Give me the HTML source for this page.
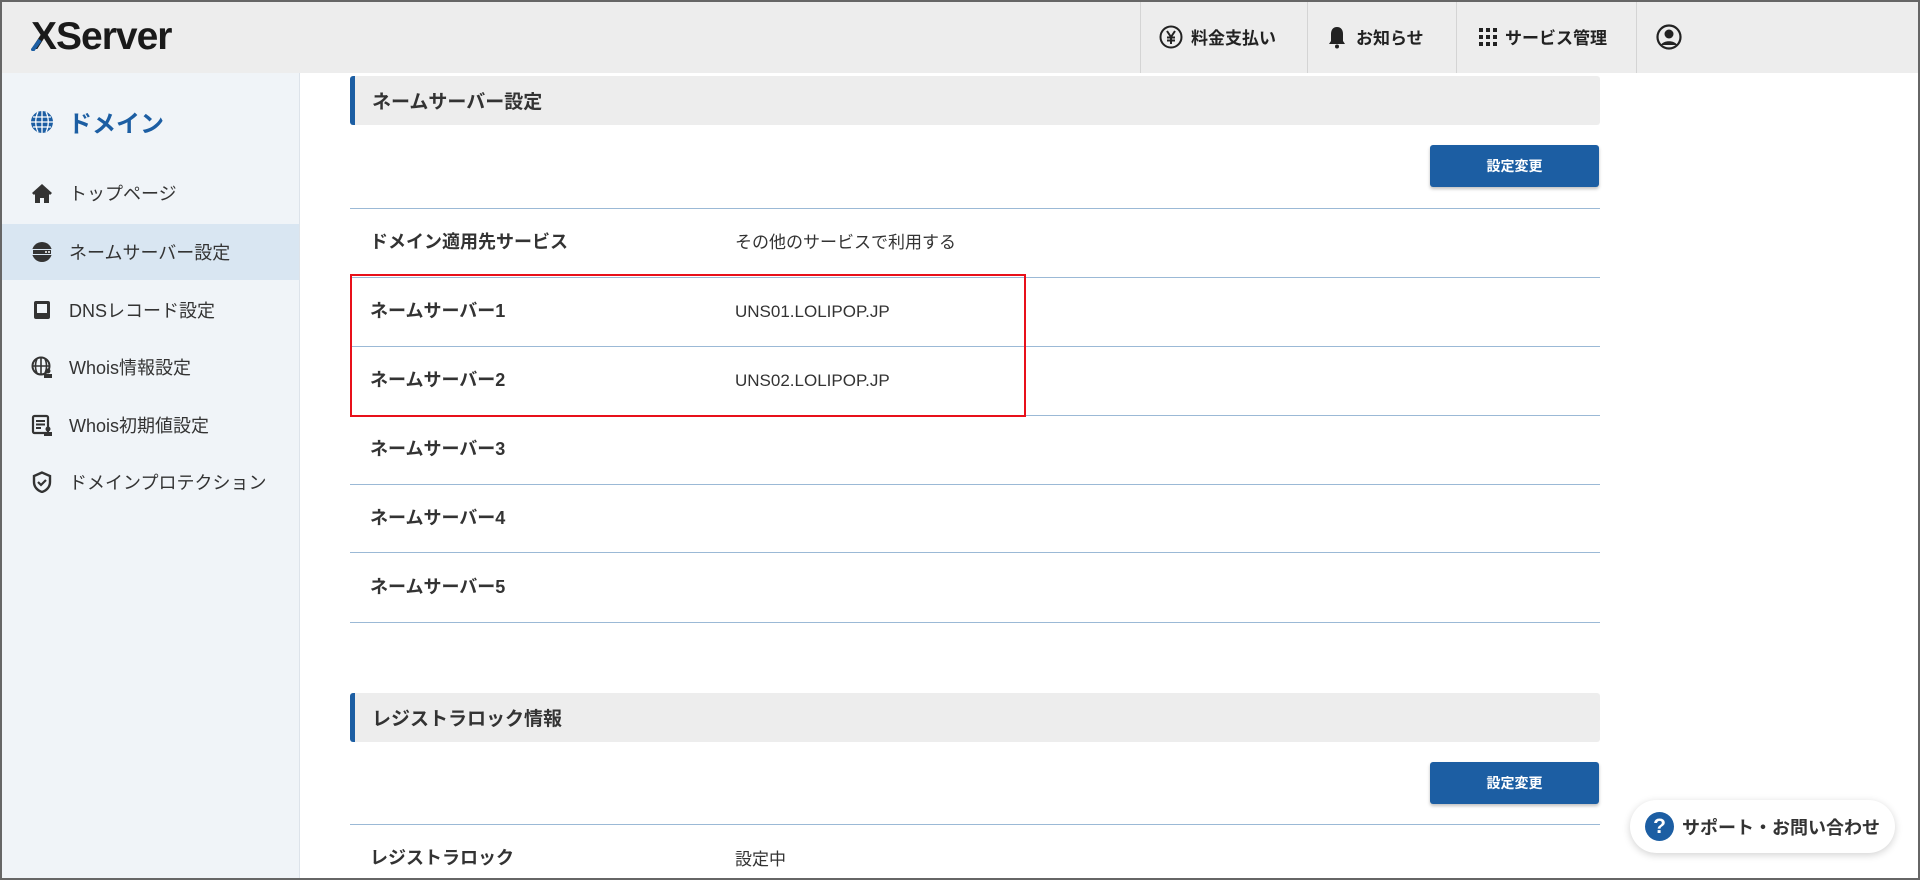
<!DOCTYPE html>
<html><head><meta charset="utf-8"><style>
*{box-sizing:border-box;margin:0;padding:0}
body{width:1920px;height:880px;overflow:hidden;font-family:"Liberation Sans","Noto Sans CJK JP",sans-serif;color:#333;background:#fff;position:relative}
.frame{position:absolute;inset:0;border:2px solid #666;z-index:10;pointer-events:none}
.hdr{position:absolute;left:0;top:0;width:1920px;height:73px;background:#ededed}
.logo{position:absolute;left:31px;top:15px;font-size:39px;font-weight:bold;color:#1a1a1a;letter-spacing:-1px}
.hi{position:absolute;top:0;height:73px;border-left:1px solid #d4d4d4;display:flex;align-items:center;font-size:17px;font-weight:bold;color:#222}
.side{position:absolute;left:0;top:73px;width:300px;height:807px;background:#f0f4f8;border-right:1px solid #dde3ea}
.stitle{position:absolute;left:30px;top:104px;font-size:24px;font-weight:bold;color:#1c5ea3;display:flex;align-items:center;gap:14px}
.si{position:absolute;left:0;width:299px;height:56px;display:flex;align-items:center;padding-left:31px;font-size:18px;color:#333;gap:16px}
.si svg{flex:none}
.act{background:#d9e6f2}
.sec{position:absolute;left:350px;width:1250px;height:49px;background:#ededed;border-left:5px solid #1c5ea3;border-radius:3px;font-size:19px;font-weight:bold;color:#333;padding-left:17px;display:flex;align-items:center}
.btn{position:absolute;left:1430px;width:169px;height:42px;background:#1c5ea3;color:#fff;font-size:14px;font-weight:bold;border-radius:3px;display:flex;align-items:center;justify-content:center;box-shadow:0 2px 3px rgba(0,0,0,.25)}
.line{position:absolute;left:350px;width:1250px;height:1px;background:#9bb9d6}
.lab{position:absolute;left:370px;font-size:18px;font-weight:bold;color:#333}
.val{position:absolute;left:735px;font-size:17px;color:#333}
.red{position:absolute;left:350px;top:274px;width:676px;height:143px;border:2px solid #e8101a}
.sup{position:absolute;left:1630px;top:800px;width:265px;height:53px;background:#fff;border-radius:27px;box-shadow:0 2px 8px rgba(0,0,0,.18);display:flex;align-items:center;padding-left:15px;gap:8px;font-size:18px;font-weight:bold;color:#333}
.q{width:29px;height:29px;border-radius:50%;background:#1c5ea3;color:#fff;font-size:21px;display:flex;align-items:center;justify-content:center}
</style></head><body>
<div class="frame"></div>
<div class="hdr">
 <div class="logo">XServer</div>
 <svg style="position:absolute;left:31px;top:37px" width="14" height="14"><path d="M1 14 L9 3" stroke="#1c5ea3" stroke-width="4"/></svg>
 <div class="hi" style="left:1140px;width:167px;padding-left:18px;gap:8px"><svg width="24" height="24" viewBox="0 0 24 24"><circle cx="12" cy="12" r="10.5" fill="none" stroke="#222" stroke-width="2"/><path d="M8 6l4 6 4-6M12 12v7M8 12.5h8M8 15.5h8" stroke="#222" stroke-width="2" fill="none"/></svg>料金支払い</div>
 <div class="hi" style="left:1307px;width:149px;padding-left:20px;gap:10px"><svg width="18" height="24" viewBox="0 0 18 24"><path d="M9 2c-4 0-6 3-6 7v7l-2 3h16l-2-3V9c0-4-2-7-6-7z" fill="#222"/><circle cx="9" cy="21.5" r="2" fill="#222"/></svg>お知らせ</div>
 <div class="hi" style="left:1456px;width:180px;padding-left:22px;gap:8px"><svg width="18" height="18" viewBox="0 0 18 18" fill="#222"><rect x="0" y="0" width="4" height="4"/><rect x="7" y="0" width="4" height="4"/><rect x="14" y="0" width="4" height="4"/><rect x="0" y="7" width="4" height="4"/><rect x="7" y="7" width="4" height="4"/><rect x="14" y="7" width="4" height="4"/><rect x="0" y="14" width="4" height="4"/><rect x="7" y="14" width="4" height="4"/><rect x="14" y="14" width="4" height="4"/></svg>サービス管理</div>
 <div class="hi" style="left:1636px;width:284px;padding-left:19px"><svg width="26" height="26" viewBox="0 0 26 26"><circle cx="13" cy="13" r="11.5" fill="none" stroke="#222" stroke-width="2.2"/><circle cx="13" cy="10" r="4.5" fill="#222"/><path d="M5 21c2-5 14-5 16 0" fill="#222"/></svg></div>
</div>
<div class="side">
 <div class="stitle" style="top:31px"><svg width="24" height="24" viewBox="0 0 24 24"><circle cx="12" cy="12" r="11" fill="#1c5ea3"/><path d="M1 12h22M12 1v22M3 7h18M3 17h18M8 2c-3 6-3 14 0 20M16 2c3 6 3 14 0 20" stroke="#fff" stroke-width="1.3" fill="none"/></svg>ドメイン</div>
 <div class="si" style="top:92px"><svg width="22" height="22" viewBox="0 0 22 22"><path d="M11 2L1 11l2 2 1-1v9h5v-5h4v5h5v-9l1 1 2-2z" fill="#333"/></svg>トップページ</div>
 <div class="si act" style="top:151px"><svg width="22" height="22" viewBox="0 0 22 22"><circle cx="11" cy="11" r="10" fill="#333"/><rect x="0" y="8" width="22" height="6" fill="#d9e6f2"/><rect x="2" y="9" width="18" height="4" fill="#333"/><circle cx="15" cy="11" r="1" fill="#fff"/><circle cx="18" cy="11" r="1" fill="#fff"/></svg>ネームサーバー設定</div>
 <div class="si" style="top:209px"><svg width="22" height="22" viewBox="0 0 22 22"><rect x="3" y="2" width="16" height="18" rx="2" fill="#333"/><rect x="6" y="5" width="10" height="9" fill="#f0f4f8"/></svg>DNSレコード設定</div>
 <div class="si" style="top:266px"><svg width="22" height="22" viewBox="0 0 22 22"><circle cx="10" cy="10" r="8.5" fill="none" stroke="#333" stroke-width="2"/><path d="M1.5 10h17M10 1.5v17M6 3c-2 4-2 10 0 14M14 3c2 4 2 10 0 14" stroke="#333" stroke-width="1.6" fill="none"/><circle cx="17" cy="15" r="2.5" fill="#333"/><rect x="13" y="18" width="8" height="4" fill="#333"/></svg>Whois情報設定</div>
 <div class="si" style="top:324px"><svg width="22" height="22" viewBox="0 0 22 22"><rect x="2" y="2" width="15" height="17" rx="1.5" fill="none" stroke="#333" stroke-width="2.2"/><path d="M5 7h9M5 10.5h9M5 14h5" stroke="#333" stroke-width="2"/><circle cx="17" cy="15" r="2.5" fill="#333"/><rect x="13" y="18" width="8" height="4" fill="#333"/></svg>Whois初期値設定</div>
 <div class="si" style="top:381px"><svg width="22" height="22" viewBox="0 0 22 22"><path d="M11 1.5L3 5v6c0 5 3.5 8.5 8 10 4.5-1.5 8-5 8-10V5z" fill="none" stroke="#333" stroke-width="2.4"/><path d="M7 11l3 3 5-5" stroke="#333" stroke-width="2.2" fill="none"/></svg>ドメインプロテクション</div>
</div>

<div class="sec" style="top:76px">ネームサーバー設定</div>
<div class="btn" style="top:145px">設定変更</div>
<div class="line" style="top:208px"></div>
<div class="lab" style="top:228px">ドメイン適用先サービス</div><div class="val" style="top:228px">その他のサービスで利用する</div>
<div class="line" style="top:277px"></div>
<div class="lab" style="top:297px">ネームサーバー1</div><div class="val" style="top:302px">UNS01.LOLIPOP.JP</div>
<div class="line" style="top:346px"></div>
<div class="lab" style="top:366px">ネームサーバー2</div><div class="val" style="top:371px">UNS02.LOLIPOP.JP</div>
<div class="line" style="top:415px"></div>
<div class="lab" style="top:435px">ネームサーバー3</div>
<div class="line" style="top:484px"></div>
<div class="lab" style="top:504px">ネームサーバー4</div>
<div class="line" style="top:552px"></div>
<div class="lab" style="top:573px">ネームサーバー5</div>
<div class="line" style="top:622px"></div>
<div class="red"></div>

<div class="sec" style="top:693px">レジストラロック情報</div>
<div class="btn" style="top:762px">設定変更</div>
<div class="line" style="top:824px"></div>
<div class="lab" style="top:844px">レジストラロック</div><div class="val" style="top:845px">設定中</div>

<div class="sup"><div class="q">?</div>サポート・お問い合わせ</div>
</body></html>
